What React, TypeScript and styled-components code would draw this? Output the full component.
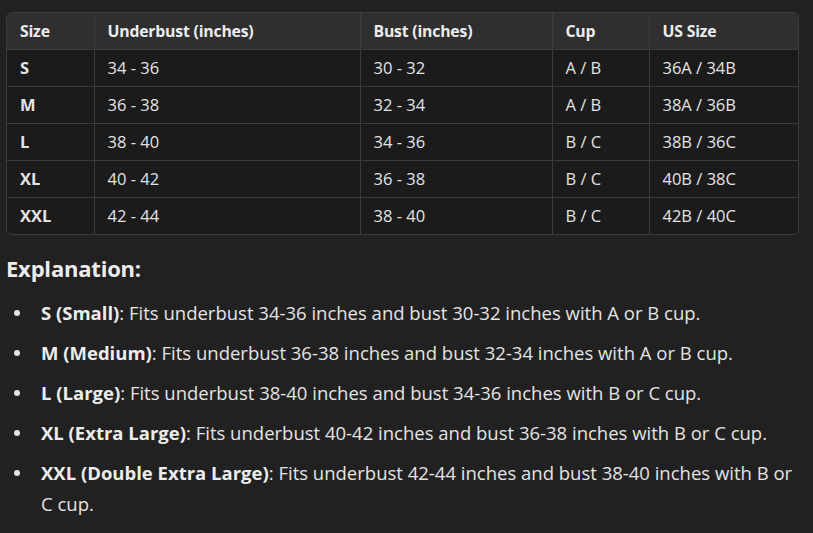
import React from "react";
import styled, { createGlobalStyle } from "styled-components";

const Global = createGlobalStyle`
  html, body { margin: 0; padding: 0; background: #212121; }
  body { font-family: "Open Sans", "Noto Sans", sans-serif; color: #ececec; }
`;

const Page = styled.div`
  width: 813px;
  height: 533px;
  box-sizing: border-box;
  padding: 12px 14px 0 6px;
  background: #212121;
  overflow: hidden;
`;

const TableWrap = styled.div`
  border: 1px solid #3c3c3c;
  border-radius: 6px;
  overflow: hidden;
  background: #1b1b1b;
`;

const Table = styled.table`
  width: 100%;
  table-layout: fixed;
  border-collapse: collapse;
`;

const Th = styled.th`
  height: 36px;
  box-sizing: border-box;
  text-align: left;
  padding: 0 13px;
  font-size: 15.8px;
  font-weight: 700;
  background: #2f2f2f;
  color: #ececec;
  letter-spacing: -0.2px;
  border-left: 1px solid #3c3c3c;
  &:first-child { border-left: none; }
`;

const Tr = styled.tr`
  border-top: 1px solid #3c3c3c;
`;

const Td = styled.td<{ $bold?: boolean }>`
  height: 37px;
  box-sizing: border-box;
  padding: 0 13px;
  font-size: 16.5px;
  font-weight: ${(p) => (p.$bold ? 700 : 400)};
  color: #e3e3e3;
  border-left: 1px solid #3c3c3c;
  &:first-child { border-left: none; }
`;

const Heading = styled.h3`
  margin: 18px 0 0 0;
  font-size: 22px;
  font-weight: 700;
  line-height: 30px;
  color: #ececec;
  letter-spacing: -0.2px;
`;

const List = styled.ul`
  margin: 14px 0 0 0;
  padding: 0 0 0 35px;
  list-style: none;
`;

const Item = styled.li`
  position: relative;
  font-size: 18.5px;
  line-height: 31px;
  margin-bottom: 9px;
  color: #e3e3e3;
  &::before {
    content: "";
    position: absolute;
    left: -27px;
    top: 13px;
    width: 6px;
    height: 6px;
    border-radius: 50%;
    background: #e3e3e3;
  }
`;

const B = styled.strong`
  font-weight: 700;
  color: #ececec;
`;

const widths = [87, 266, 192, 97, 151];
const headers = ["Size", "Underbust (inches)", "Bust (inches)", "Cup", "US Size"];

const rows = [
  ["S", "34 - 36", "30 - 32", "A / B", "36A / 34B"],
  ["M", "36 - 38", "32 - 34", "A / B", "38A / 36B"],
  ["L", "38 - 40", "34 - 36", "B / C", "38B / 36C"],
  ["XL", "40 - 42", "36 - 38", "B / C", "40B / 38C"],
  ["XXL", "42 - 44", "38 - 40", "B / C", "42B / 40C"],
];

const items: [string, string][] = [
  ["S (Small)", "Fits underbust 34-36 inches and bust 30-32 inches with A or B cup."],
  ["M (Medium)", "Fits underbust 36-38 inches and bust 32-34 inches with A or B cup."],
  ["L (Large)", "Fits underbust 38-40 inches and bust 34-36 inches with B or C cup."],
  ["XL (Extra Large)", "Fits underbust 40-42 inches and bust 36-38 inches with B or C cup."],
  ["XXL (Double Extra Large)", "Fits underbust 42-44 inches and bust 38-40 inches with B or C cup."],
];

export default function App() {
  return (
    <Page>
      <Global />
      <TableWrap>
        <Table>
          <colgroup>
            {widths.map((w, i) => (
              <col key={i} style={{ width: w }} />
            ))}
          </colgroup>
          <thead>
            <tr>
              {headers.map((h) => (
                <Th key={h}>{h}</Th>
              ))}
            </tr>
          </thead>
          <tbody>
            {rows.map((r) => (
              <Tr key={r[0]}>
                {r.map((c, i) => (
                  <Td key={i} $bold={i === 0}>{c}</Td>
                ))}
              </Tr>
            ))}
          </tbody>
        </Table>
      </TableWrap>
      <Heading>Explanation:</Heading>
      <List>
        {items.map(([b, t]) => (
          <Item key={b}>
            <B>{b}</B>: {t}
          </Item>
        ))}
      </List>
    </Page>
  );
}
